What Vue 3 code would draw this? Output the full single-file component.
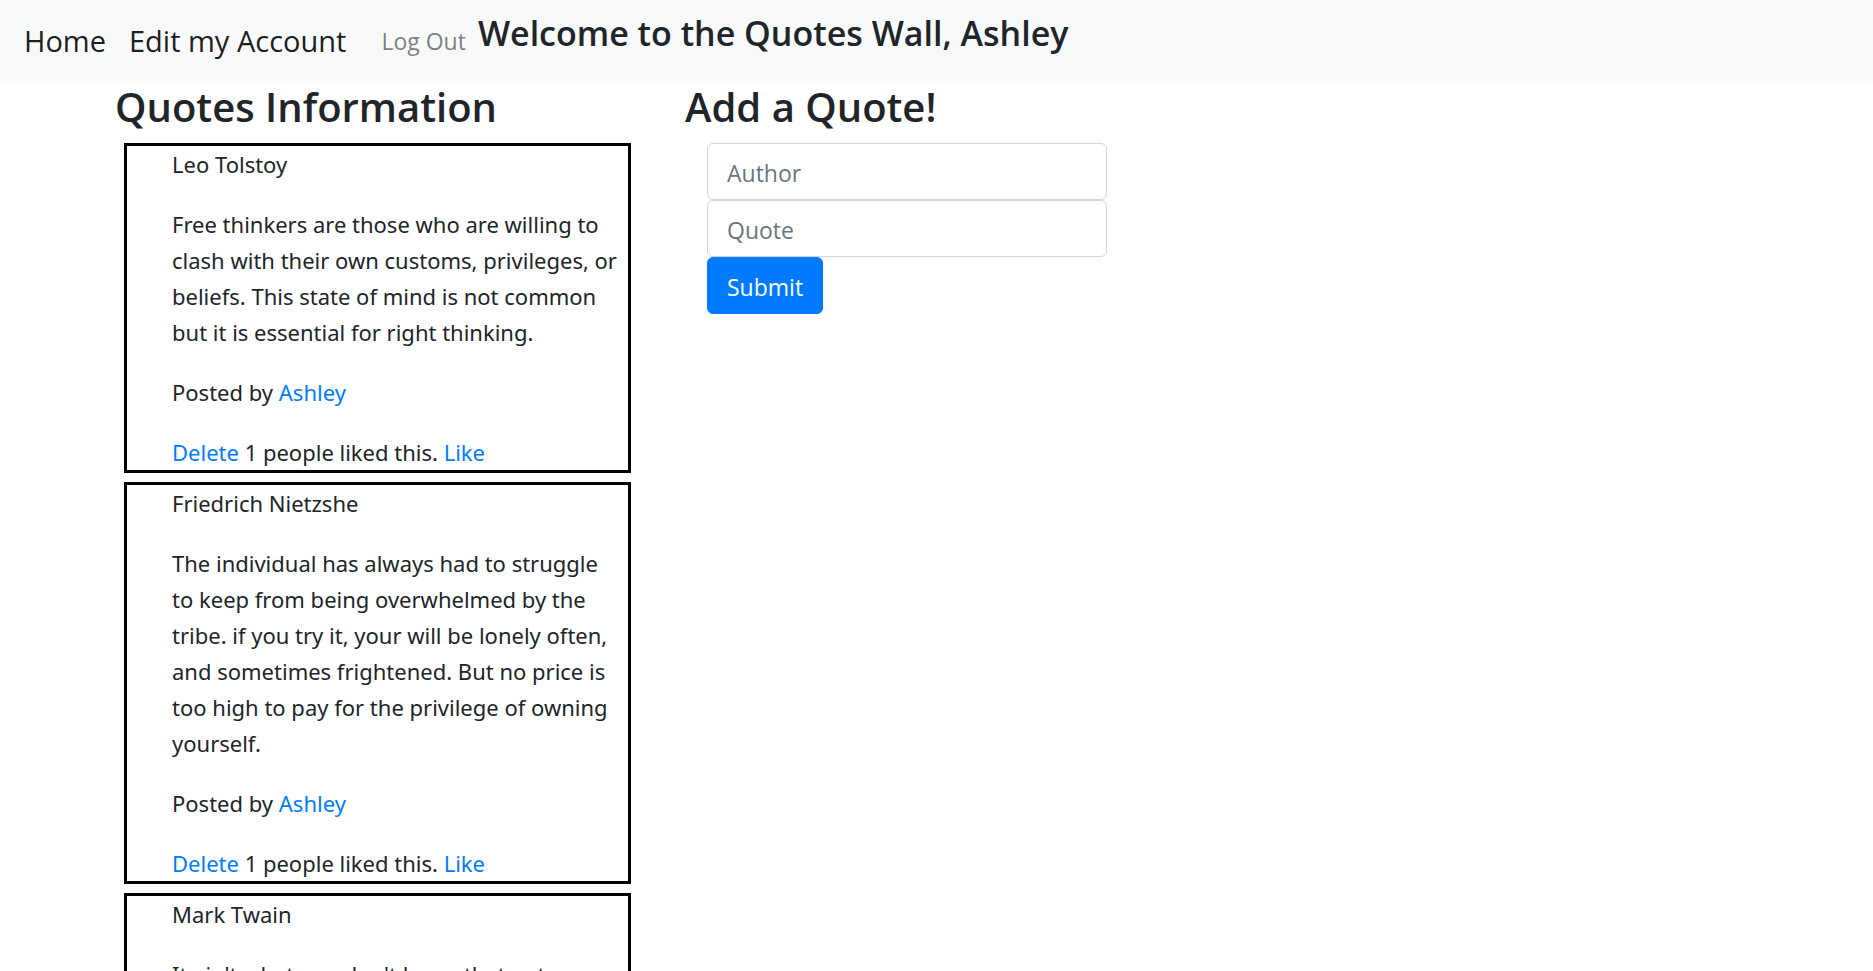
<script setup>
const quotes = [
  {
    author: 'Leo Tolstoy',
    text: 'Free thinkers are those who are willing to\nclash with their own customs, privileges, or\nbeliefs. This state of mind is not common\nbut it is essential for right thinking.',
    poster: 'Ashley',
    likes: 1
  },
  {
    author: 'Friedrich Nietzshe',
    text: 'The individual has always had to struggle\nto keep from being overwhelmed by the\ntribe. if you try it, your will be lonely often,\nand sometimes frightened. But no price is\ntoo high to pay for the privilege of owning\nyourself.',
    poster: 'Ashley',
    likes: 1
  },
  {
    author: 'Mark Twain',
    text: "It ain't what you don't know that gets\nyou into trouble. It's what you know for\nsure that just ain't so.",
    poster: 'Ashley',
    likes: 1
  }
]
</script>

<template>
  <div class="page">
    <nav class="navbar">
      <a class="brand" href="#">Home</a>
      <a class="brand" href="#">Edit my Account</a>
      <a class="logout" href="#">Log Out</a>
      <h4 class="welcome">Welcome to the Quotes Wall, Ashley</h4>
    </nav>
    <main class="columns">
      <section>
        <h3 class="heading">Quotes Information</h3>
        <div class="cards">
          <article v-for="q in quotes" :key="q.author" class="card">
            <p>{{ q.author }}</p>
            <p class="quote">{{ q.text }}</p>
            <p>Posted by <a href="#">{{ q.poster }}</a></p>
            <p><a href="#">Delete</a> {{ q.likes }} people liked this. <a href="#">Like</a></p>
          </article>
        </div>
      </section>
      <section>
        <h3 class="heading">Add a Quote!</h3>
        <form class="form" @submit.prevent>
          <input type="text" placeholder="Author" aria-label="Author" />
          <input type="text" placeholder="Quote" aria-label="Quote" />
          <button type="submit">Submit</button>
        </form>
      </section>
    </main>
  </div>
</template>

<style>
body {
  margin: 0;
  background: #fff;
}
</style>

<style scoped>
.page {
  height: 100vh;
  overflow: hidden;
  font-family: "Open Sans", "Noto Sans", sans-serif;
  font-size: 23px;
  line-height: 36px;
  color: #212529;
}
a {
  color: #007bff;
  text-decoration: none;
}
h3,
h4,
p {
  margin: 0;
}
.navbar {
  display: flex;
  align-items: center;
  min-height: 81px;
  padding-left: 24px;
  background: #f8f9fa;
}
.brand {
  margin-right: 23px;
  font-size: 29px;
  color: rgba(0, 0, 0, 0.9);
}
.logout {
  margin: 0 12px;
  color: rgba(0, 0, 0, 0.5);
}
.welcome {
  align-self: flex-start;
  padding-top: 12px;
  font-size: 34px;
  line-height: 42px;
  font-weight: 600;
}
.columns {
  display: grid;
  grid-template-columns: 516px 1fr;
  column-gap: 54px;
  padding: 0 115px;
}
.heading {
  padding: 2px 0 12px;
  font-size: 40px;
  line-height: 48px;
  font-weight: 600;
}
.cards {
  display: flex;
  flex-direction: column;
  gap: 9px;
  padding-left: 9px;
}
.card {
  display: flex;
  flex-direction: column;
  gap: 24px;
  padding-left: 45px;
  border: 3px solid #000;
  font-family: "Noto Sans", "Open Sans", sans-serif;
  font-size: 22px;
}
.quote {
  white-space: pre-line;
}
.form {
  display: flex;
  flex-direction: column;
  align-items: flex-start;
  padding-left: 22px;
}
input,
button {
  box-sizing: border-box;
  height: 57px;
  padding: 2px 19px 0;
  border: 1px solid #ced4da;
  border-radius: 6px;
  font: inherit;
}
input {
  width: 400px;
  background: #fff;
  color: #495057;
}
input::placeholder {
  color: #6c757d;
  opacity: 1;
}
button {
  border-color: #007bff;
  background: #007bff;
  color: #fff;
}
</style>
